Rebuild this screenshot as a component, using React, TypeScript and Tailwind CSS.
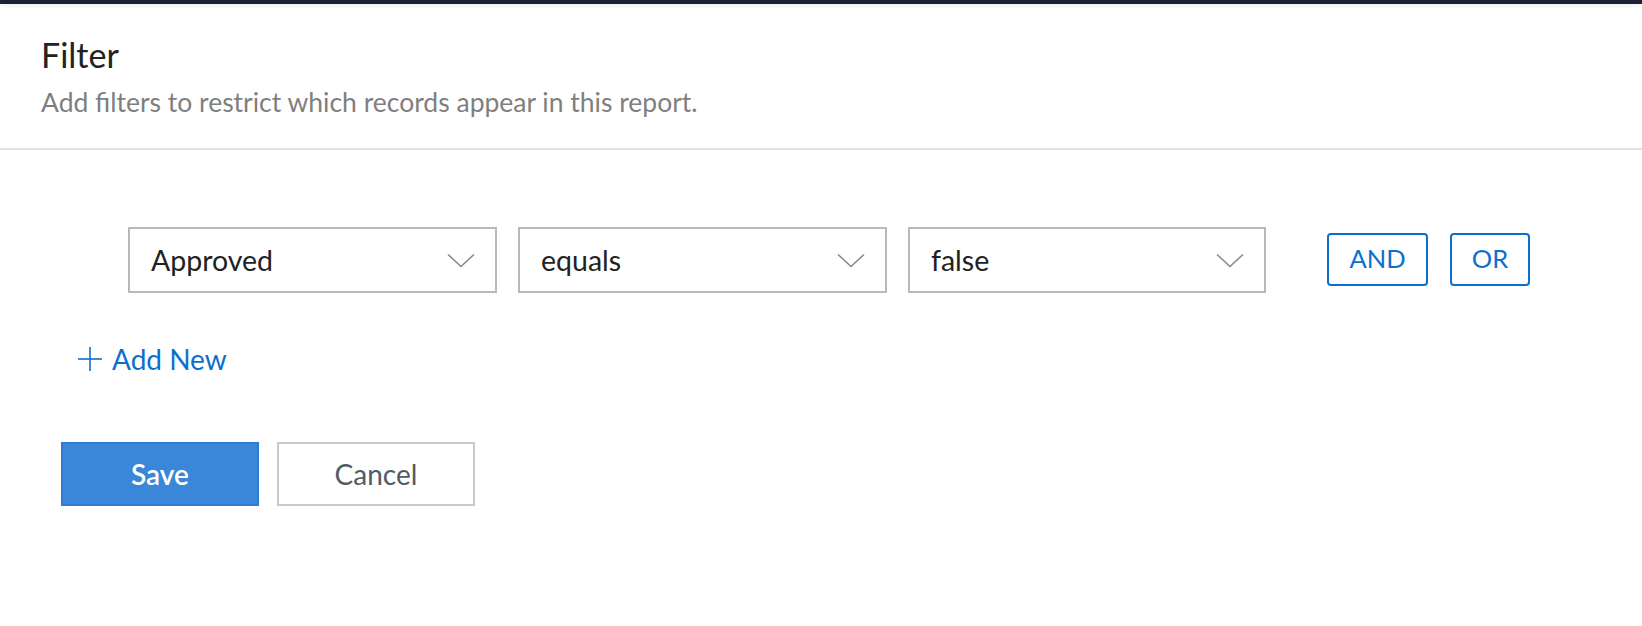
import React from "react";

function Chevron() {
  return (
    <svg width="28" height="15" viewBox="0 0 28 15" fill="none" className="shrink-0">
      <polyline points="1,1.5 14,13.5 27,1.5" stroke="#8a8a8e" strokeWidth="1.6" fill="none" />
    </svg>
  );
}

function Select({ label, w }: { label: string; w: string }) {
  return (
    <div
      className={`${w} h-[66px] border-2 border-[#b7b9bf] bg-white flex items-center justify-between pl-[21px] pr-[20px]`}
    >
      <span className="text-[28.5px] text-[#222222] leading-none">{label}</span>
      <Chevron />
    </div>
  );
}

export default function App() {
  return (
    <div className="min-h-screen bg-white font-['Lato','Noto_Sans',sans-serif]">
      <div className="h-[4px] bg-[#1c2232] shadow-[0_2px_4px_rgba(0,0,0,0.08)]" />
      <div className="px-[41px] pt-[31px] pb-[31px] border-b-2 border-[#dfe0ec]">
        <h1 className="text-[34px] leading-[40px] text-[#222222]">Filter</h1>
        <p className="mt-[12px] text-[26.5px] leading-[30px] text-[#7f7f7f]">
          Add filters to restrict which records appear in this report.
        </p>
      </div>

      <div className="pl-[128px] pt-[77px] flex items-center">
        <div className="flex gap-[21px]">
          <Select label="Approved" w="w-[369px]" />
          <Select label="equals" w="w-[369px]" />
          <Select label="false" w="w-[358px]" />
        </div>
        <div className="ml-[61px] flex gap-[22px] -mt-[2px]">
          <button className="w-[101px] h-[53px] border-2 border-[#0b6fce] rounded-[4px] text-[#0b6fce] text-[25.5px] leading-none">
            AND
          </button>
          <button className="w-[80px] h-[53px] border-2 border-[#0b6fce] rounded-[4px] text-[#0b6fce] text-[25.5px] leading-none">
            OR
          </button>
        </div>
      </div>

      <div className="pl-[78px] mt-[52px] flex items-center">
        <svg width="24" height="24" viewBox="0 0 24 24" className="shrink-0">
          <line x1="12" y1="0" x2="12" y2="24" stroke="#0b6fce" strokeWidth="1.6" />
          <line x1="0" y1="12" x2="24" y2="12" stroke="#0b6fce" strokeWidth="1.6" />
        </svg>
        <span className="ml-[10px] text-[28px] leading-none text-[#0b6fce]">Add New</span>
      </div>

      <div className="pl-[61px] mt-[69px] flex gap-[18px]">
        <button className="w-[198px] h-[64px] bg-[#3a87d9] border-2 border-[#2d7bd2] text-white text-[28px] font-semibold leading-none">
          Save
        </button>
        <button className="w-[198px] h-[64px] bg-white border-2 border-[#c9c9c9] text-[#515b66] text-[28px] leading-none">
          Cancel
        </button>
      </div>
    </div>
  );
}
